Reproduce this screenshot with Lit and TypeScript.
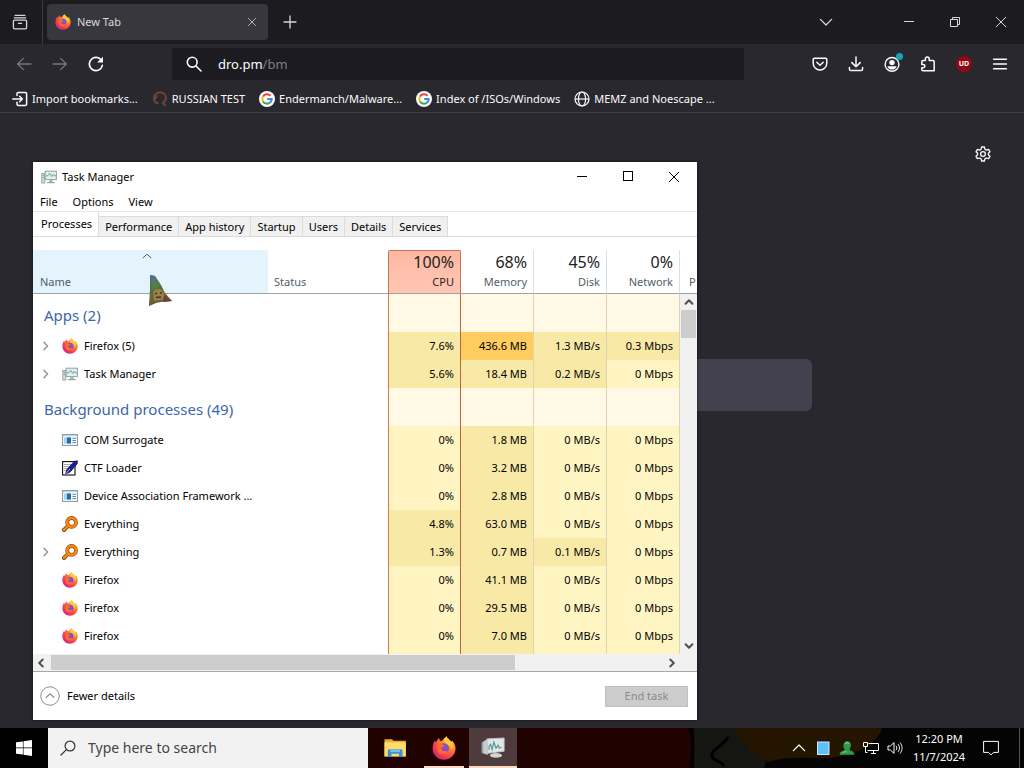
import { LitElement, html, css, svg, nothing } from "lit";
import { customElement } from "lit/decorators.js";
import { classMap } from "lit/directives/class-map.js";

type Level = "lo" | "mid" | "hi";
interface Proc {
  name: string;
  icon: string;
  expand?: boolean;
  values: [string, Level][];
}

const proc = (name: string, icon: string, values: string, levels: string, expand = false): Proc => ({
  name,
  icon,
  expand,
  values: values.split("|").map((v, i) => [v, ({ l: "lo", m: "mid", h: "hi" } as const)[levels[i] as "l" | "m" | "h"]]),
});

const groups: { title: string; rows: Proc[] }[] = [
  {
    title: "Apps (2)",
    rows: [
      proc("Firefox (5)", "firefox", "7.6%|436.6 MB|1.3 MB/s|0.3 Mbps", "mhmm", true),
      proc("Task Manager", "taskmgr", "5.6%|18.4 MB|0.2 MB/s|0 Mbps", "mmml", true),
    ],
  },
  {
    title: "Background processes (49)",
    rows: [
      proc("COM Surrogate", "dll", "0%|1.8 MB|0 MB/s|0 Mbps", "lmll"),
      proc("CTF Loader", "ctf", "0%|3.2 MB|0 MB/s|0 Mbps", "lmll"),
      proc("Device Association Framework ...", "dll", "0%|2.8 MB|0 MB/s|0 Mbps", "lmll"),
      proc("Everything", "everything", "4.8%|63.0 MB|0 MB/s|0 Mbps", "mmll"),
      proc("Everything", "everything", "1.3%|0.7 MB|0.1 MB/s|0 Mbps", "mmml", true),
      proc("Firefox", "firefox", "0%|41.1 MB|0 MB/s|0 Mbps", "lmll"),
      proc("Firefox", "firefox", "0%|29.5 MB|0 MB/s|0 Mbps", "lmll"),
      proc("Firefox", "firefox", "0%|7.0 MB|0 MB/s|0 Mbps", "lmll"),
    ],
  },
];

const line = (d: string, w = 1.2) =>
  svg`<path d=${d} fill="none" stroke="currentColor" stroke-width=${w} stroke-linecap="round" stroke-linejoin="round" />`;

const shapes: Record<string, unknown> = {
  firefox: svg`
    <path d="M8 1.6C8.6 1.5 9.4 0.7 9.6 0.2 10.2 1.6 11.6 2.3 12.4 3.4 13 3.9 13.3 3.6 13.4 3.1 15 4.6 15.9 6.7 15.7 8.8 15.3 12.9 12 15.8 8 15.8 3.8 15.8 0.4 12.5 0.4 8.3 0.4 6.2 1 4.3 2.1 2.8 2.2 3.5 2.4 3.9 2.8 4.1 3.1 3 3.8 2 4.8 1.3 4.8 2.3 5.3 3 6 3.3 7 3.3 7.4 2.2 8 1.6Z" fill="url(#fx-body)" />
    <path d="M9.6 0.2C10.2 1.6 11.6 2.3 12.4 3.4 14 5.2 14.2 7.4 13.2 9.4 12.9 7.6 12 6.4 10.4 5.8 8.4 5 7.6 3.4 8 1.6 8.7 1.4 9.3 0.8 9.6 0.2Z" fill="#ffc83c" />
    <circle cx="8" cy="8.2" r="3.4" fill="#8a4fc8" />
    <path d="M4.2 6.2C5.4 5 7 5.2 8.4 6.4 7.8 7.6 6.6 7.2 6.2 8.2 6.2 10 8.6 10.8 10.6 9.8 9.8 12.4 6.6 13.2 4.6 11.4 3.2 10 3.2 7.8 4.2 6.2Z" fill="#ff6a2b" />`,
  taskmgr: svg`
    <rect x="0.8" y="4.5" width="3" height="9.5" fill="#d5dedf" stroke="#86979b" stroke-width="0.8" />
    <path d="M1.6 6.5h1.4M1.6 8.5h1.4" stroke="#6e8084" stroke-width="0.7" />
    <rect x="4.2" y="2.2" width="11.2" height="8.4" fill="#e4efef" stroke="#8fa2a6" stroke-width="1" />
    <path d="M5 7l2-.4 1.6-2.4 2 3.4 1.6-2.4 1 1.6H15" fill="none" stroke="#5aa093" stroke-width="0.9" />
    <path d="M8.4 10.8h3l.4 2.4H8z" fill="#a8b7ba" />
    <path d="M6.2 13.6h7.4" stroke="#8fa2a6" stroke-width="1.2" />`,
  dll: svg`
    <rect x="0.5" y="2.5" width="15" height="11" fill="#f4f6f7" stroke="#8a9ba8" />
    <path d="M1 3.5h14" stroke="#b9d0de" stroke-width="1.2" />
    <rect x="2" y="5.4" width="3" height="6.2" fill="#a7d0ea" />
    <rect x="5" y="5.4" width="4" height="6.2" fill="#1d6fa8" />
    <path d="M10.4 6.4h3.6M10.4 8.5h3.6M10.4 10.6h3.6" stroke="#6e8ea5" stroke-width="1" />`,
  ctf: svg`
    <rect x="0.6" y="1.6" width="12.4" height="13.4" fill="#fff" stroke="#111" stroke-width="1.1" />
    <path d="M2.5 4.5h8M2.5 6.5h7M2.5 8.5h5M2.5 10.5h3" stroke="#333" stroke-width="0.9" stroke-dasharray="1 1" />
    <path d="M15.4 0.8 12.2 1.4 5.2 9.2 3 14.4 8.4 11.8 15.2 3.6Z" fill="#1b1c9c" stroke="#090a38" stroke-width="0.7" />
    <path d="M3 14.4 8 9" stroke="#fff" stroke-width="0.7" />`,
  everything: svg`
    <path d="M2 14 6 9.8" stroke="#8f4a00" stroke-width="4" stroke-linecap="round" />
    <circle cx="9.6" cy="6.4" r="4.4" fill="#fff" stroke="#8f4a00" stroke-width="3.8" />
    <path d="M2 14 6 9.8" stroke="#f5871c" stroke-width="2.4" stroke-linecap="round" />
    <circle cx="9.6" cy="6.4" r="4.4" fill="none" stroke="#f5871c" stroke-width="2.5" />`,
  google: svg`
    <circle cx="8" cy="8" r="8" fill="#fff" />
    <path d="M11.5 4.8A4.7 4.7 0 0 0 4 5.6" fill="none" stroke="#ea4335" stroke-width="2" />
    <path d="M4 5.6A4.7 4.7 0 0 0 4 10.4" fill="none" stroke="#fbbc05" stroke-width="2" />
    <path d="M4 10.4A4.7 4.7 0 0 0 11 11.6" fill="none" stroke="#34a853" stroke-width="2" />
    <path d="M11 11.6A4.7 4.7 0 0 0 12.7 8.1H8.2" fill="none" stroke="#4285f4" stroke-width="2" />`,
  horse: svg`
    <path d="M6.4 12.6C3.4 11.8 1.8 9.2 2 6.6 2.4 3.4 5 1.4 8 1.4c3.4 0 6 2.4 6 5.6 0 2.4-1.6 3.8-3 4.8l2.6 3.4" fill="none" stroke="#6b4138" stroke-width="2.2" />
    <path d="M5.4 4.4 3.2 8" stroke="#8d5a4b" stroke-width="1" />`,
  globe: svg`<g fill="none" stroke="currentColor" stroke-width="1.2"><circle cx="8" cy="8" r="7"/><ellipse cx="8" cy="8" rx="3.6" ry="7"/><path d="M1 8h14"/></g>`,
  import: svg`${line("M5 4.6V2.6A1.2 1.2 0 0 1 6.2 1.4H13.4A1.2 1.2 0 0 1 14.6 2.6V13.2A1.2 1.2 0 0 1 13.4 14.4H6.2A1.2 1.2 0 0 1 5 13.2V11.2M0.8 8H10.4M7.6 5.2 10.4 8 7.6 10.8", 1.5)}`,
  view: svg`${line("M3.2 1.4H12.8M2.2 3.8H13.8M2.6 6.2H13.4A1.2 1.2 0 0 1 14.6 7.4V13.4A1.4 1.4 0 0 1 13.2 14.8H2.8A1.4 1.4 0 0 1 1.4 13.4V7.4A1.2 1.2 0 0 1 2.6 6.2ZM6.4 9.4H9.6", 1.3)}`,
  back: svg`${line("M15 8H1.6M7.4 2.4 1.6 8 7.4 13.6", 1.3)}`,
  forward: svg`${line("M1 8H14.4M8.6 2.4 14.4 8 8.6 13.6", 1.3)}`,
  reload: svg`${line("M14 5.4A6.6 6.6 0 1 0 14.4 9.4", 1.6)}<path d="M15 0.8V6.6H9.2Z" fill="currentColor" />`,
  find: svg`<circle cx="6.2" cy="6.2" r="4.9" fill="none" stroke="currentColor" stroke-width="1.6" />${line("M10 10 15 15", 1.6)}`,
  pocket: svg`${line("M2.6 2.2H13.4A1.4 1.4 0 0 1 14.8 3.6V7.2A6.8 6.8 0 0 1 1.2 7.2V3.6A1.4 1.4 0 0 1 2.6 2.2ZM4.8 6.2 8 9.2 11.2 6.2", 1.5)}`,
  download: svg`${line("M8 1V10.6M3.8 6.6 8 10.8 12.2 6.6M1.4 11.6V13A1.6 1.6 0 0 0 3 14.6H13A1.6 1.6 0 0 0 14.6 13V11.6", 1.5)}`,
  account: svg`<circle cx="8" cy="8.4" r="6.9" fill="none" stroke="currentColor" stroke-width="1.4" /><circle cx="8" cy="6.6" r="2.7" fill="currentColor" /><path d="M3.4 10.2H12.6C12 12.4 10.2 13.6 8 13.6S4 12.4 3.4 10.2Z" fill="currentColor" />`,
  puzzle: svg`${line("M5.4 4.6V3A1.9 1.9 0 0 1 9.2 3V4.6H13A1.2 1.2 0 0 1 14.2 5.8V14.8H3A1.2 1.2 0 0 1 1.8 13.6V11.8H3.2A1.7 1.7 0 0 0 3.2 8.4H1.8V5.8A1.2 1.2 0 0 1 3 4.6Z", 1.5)}`,
  menu: svg`${line("M1.6 3.2H14.4M1.6 8H14.4M1.6 12.8H14.4", 1.5)}`,
  gear: svg`${line("M6.6 1H9.4L9.9 3.2 11.4 4.1 13.6 3.4 15 5.8 13.4 7.3V8.8L15 10.3 13.6 12.7 11.4 12 9.9 12.9 9.4 15H6.6L6.1 12.9 4.6 12 2.4 12.7 1 10.3 2.6 8.8V7.3L1 5.8 2.4 3.4 4.6 4.1 6.1 3.2Z", 1.3)}<circle cx="8" cy="8" r="2.4" fill="none" stroke="currentColor" stroke-width="1.3" />`,
  close: svg`${line("M3.2 3.2 12.8 12.8M12.8 3.2 3.2 12.8", 1)}`,
  plus: svg`${line("M8 2V14M2 8H14", 1.3)}`,
  down: svg`${line("M2.4 5.4 8 11 13.6 5.4", 1.3)}`,
  up: svg`${line("M2.4 10.6 8 5 13.6 10.6", 1.3)}`,
  minimize: svg`<path d="M3 7.5H13" stroke="currentColor" />`,
  maximize: svg`<rect x="3.5" y="2.5" width="9" height="9" fill="none" stroke="currentColor" />`,
  restore: svg`<path d="M3.5 5.5H10.5V12.5H3.5ZM5.5 5.5V3.5H12.5V10.5H10.5" fill="none" stroke="currentColor" />`,
  thickUp: svg`${line("M4.6 9.8 8 6.2 11.4 9.8", 2)}`,
  thickDown: svg`${line("M4.6 6.2 8 9.8 11.4 6.2", 2)}`,
  thickLeft: svg`${line("M9.8 4.6 6.2 8 9.8 11.4", 2)}`,
  thickRight: svg`${line("M6.2 4.6 9.8 8 6.2 11.4", 2)}`,
  expand: svg`${line("M6 4.4 9.6 8 6 11.6", 1.5)}`,
  sort: svg`${line("M4 9.8 8 6.2 12 9.8", 1)}`,
  fewer: svg`<circle cx="8" cy="8" r="7.4" fill="none" stroke="#8c8c8c" stroke-width="0.8" /><path d="M4.6 9.4 8 6.2 11.4 9.4" fill="none" stroke="#8c8c8c" stroke-width="0.9" />`,
  windows: svg`<path d="M0 2.3 6.9 1.4V7.6H0ZM7.5 1.3 16 0V7.6H7.5ZM0 8.3H6.9V14.6L0 13.7ZM7.5 8.3H16V16L7.5 14.7Z" fill="#fff" />`,
  lens: svg`<circle cx="10" cy="6" r="4.9" fill="none" stroke="currentColor" stroke-width="1.2" />${line("M6.4 9.6 1 15", 1.2)}`,
  folder: svg`
    <path d="M1 2.2H6L7 3.2H15.2V13.6H1Z" fill="#e9ae36" /><path d="M1 4.2H15.2V13.6H1Z" fill="#ffdb68" />
    <path d="M3.2 14V9.8A1 1 0 0 1 4.2 8.8H12A1 1 0 0 1 13 9.8V14H10.6V11.8H5.6V14Z" fill="#3b8fd4" /><path d="M4.8 9H11.4V10.6H4.8Z" fill="#7fc0ee" />`,
  bigTaskmgr: svg`
    <path d="M0.4 5 3.4 3V13L0.4 12Z" fill="#9ba3a4" />
    <path d="M1.6 4.6 4.6 2.6V13.4L1.6 12Z" fill="#c6cbcb" />
    <path d="M4 2.6 15.4 2V10.8L4.6 12.2Z" fill="#e4e6e6" stroke="#c2c6c6" stroke-width="0.6" />
    <path d="M5.4 9.8V7.4L6.4 6.2 7.4 9.6 8.6 4.8 10 8.8 11.4 6.8 12.2 8.8 13.6 8" fill="none" stroke="#4f9c98" stroke-width="0.8" />
    <ellipse cx="10" cy="13.6" rx="4" ry="1.6" fill="#d2d4d4" />`,
  tile: svg`<rect x="2.5" y="2" width="11.5" height="12.5" fill="#5ec0f8" stroke="#cdeafb" />`,
  person: svg`<path d="M0.6 14.8C0.6 12 3 10.8 5.6 10.2L5.2 8.4C4 6.8 4 4 5.4 2.4 7 0.6 10 0.8 11.4 2.8 12.6 4.6 12 7 10.8 8.6L10.6 10.2C13 10.8 15.4 12 15.4 14.8Z" fill="#2e9a4b" /><path d="M6.4 4C6.8 2.8 8.4 2.2 9.8 3.2" stroke="#a8e6ac" fill="none" /><path d="M3 13.4C4 11.8 6 11.4 8 12" stroke="#79cf85" fill="none" />`,
  network: svg`<path d="M5.5 3.5H15.5V10.5H4.5M8 13.5H13M10.5 10.5V13.5M0.5 2.5H4.5V6.5H0.5ZM2.5 6.5V12.5H4.5" fill="none" stroke="#fff" />`,
  sound: svg`<path d="M1 6H3.4L7 2.6V13.4L3.4 10H1Z" fill="none" stroke="#fff" />${line("M9.2 6C10 7.2 10 8.8 9.2 10M11.2 4.4C13 6.6 13 9.4 11.2 11.6M13.2 2.8C15.8 6 15.8 10 13.2 13.2", 0.9)}`,
  notify: svg`<path d="M0.6 1.4H15.4V12.4H10.6L8 14.8 5.4 12.4H0.6Z" fill="none" stroke="#fff" />`,
};

const icon = (name: string, size: "s12" | "s16" | "s20" | "s24" = "s16") =>
  html`<svg class="icon ${size}" viewBox="0 0 16 16" aria-hidden="true">${shapes[name]}</svg>`;

const gradients = html`<svg class="defs" width="0" height="0" aria-hidden="true"><defs>
  <radialGradient id="fx-body" cx="0.8" cy="0.15" r="1"><stop offset="0" stop-color="#ffd43a" /><stop offset="0.45" stop-color="#ff7b2e" /><stop offset="0.8" stop-color="#f0355a" /><stop offset="1" stop-color="#c8208c" /></radialGradient>
</defs></svg>`;

const shared = css`
  .defs { position: absolute; }
  .icon { display: block; flex: none; }
  .s12 { width: 12px; height: 12px; }
  .s16 { width: 16px; height: 16px; }
  .s20 { width: 20px; height: 20px; }
  .s24 { width: 24px; height: 24px; }
  button { font: inherit; color: inherit; background: none; border: 0; padding: 0; }
`;

@customElement("firefox-window")
export class FirefoxWindow extends LitElement {
  static styles = [shared, css`
    :host { display: flex; flex-direction: column; color: #fbfbfe; font: 11px/16px "Noto Sans", "Open Sans", sans-serif; background: #29282e; }
    button { display: flex; align-items: center; justify-content: center; }
    .strip { display: flex; align-items: center; height: 44px; background: #1c1b20; color: #d8d8dc; }
    .view { width: 40px; height: 44px; margin-right: 2px; }
    .tab { display: flex; align-items: center; gap: 6px; box-sizing: border-box; width: 221px; height: 36px; margin-left: 4px; padding: 0 10px 0 8px; border-radius: 4px; background: #38373e; }
    .divider { width: 1px; height: 44px; background: #3c3b41; }
    .label { flex: 1; }
    .add { width: 43px; height: 36px; }
    .alltabs { margin-left: auto; width: 36px; height: 36px; margin-right: 42px; }
    .caption { width: 46px; height: 44px; }
    .nav { display: flex; align-items: center; height: 40px; padding: 0 6px; }
    .nav button { width: 36px; height: 36px; position: relative; }
    .nav .dim { color: #77767c; }
    .gap { flex: 1; max-width: 58px; }
    .urlbar { flex: 8; display: flex; align-items: center; gap: 16px; height: 32px; padding: 0 14px; background: #1c1b22; }
    .field { position: relative; display: flex; flex: 1; }
    .field input { width: 100%; border: 0; padding: 0; background: none; color: transparent; font: inherit; font-size: 13px; line-height: 20px; outline: none; }
    .host { position: absolute; inset: 0; font-size: 13px; line-height: 20px; pointer-events: none; color: #fbfbfe; }
    .path { color: #7e7d83; }
    .dot { position: absolute; top: 7px; right: 7px; width: 7px; height: 7px; border-radius: 50%; background: #18a3b8; }
    .shield { display: grid; place-items: center; width: 16px; height: 16px; border-radius: 50%; background: #8e0a14; font-weight: bold; font-size: 7px; line-height: 8px; }
    .bookmarks { display: flex; align-items: center; gap: 14px; box-sizing: border-box; height: 29px; padding: 1px 12px 0; border-bottom: 1px solid #3f3e44; }
    .bookmarks a { display: flex; align-items: center; gap: 4px; color: inherit; text-decoration: none; white-space: nowrap; }
    .page { flex: 1; display: flex; flex-direction: column; padding: 32px 32px 0; }
    .gear { align-self: flex-end; width: 18px; height: 18px; }
    .search { align-self: center; box-sizing: border-box; width: min(600px, 100%); height: 52px; margin-top: 196px; border: 0; border-radius: 6px; background: #42414d; color: inherit; }
  `];

  render() {
    const marks = [
      ["import", "Import bookmarks..."],
      ["horse", "RUSSIAN TEST"],
      ["google", "Endermanch/Malware..."],
      ["google", "Index of /ISOs/Windows"],
      ["globe", "MEMZ and Noescape ..."],
    ];
    return html`
      ${gradients}
      <header class="strip">
        <button class="view" aria-label="View">${icon("view")}</button>
        <span class="divider"></span>
        <div class="tab">${icon("firefox")}<span class="label">New Tab</span><button aria-label="Close tab">${icon("close", "s12")}</button></div>
        <button class="add" aria-label="Open a new tab">${icon("plus")}</button>
        <button class="alltabs" aria-label="List all tabs">${icon("down")}</button>
        <button class="caption" aria-label="Minimize">${icon("minimize")}</button>
        <button class="caption" aria-label="Restore">${icon("restore")}</button>
        <button class="caption" aria-label="Close">${icon("close")}</button>
      </header>
      <nav class="nav">
        <button class="dim" aria-label="Back">${icon("back")}</button>
        <button class="dim" aria-label="Forward">${icon("forward")}</button>
        <button aria-label="Reload">${icon("reload")}</button>
        <span class="gap"></span>
        <div class="urlbar">${icon("find")}
          <div class="field"><input aria-label="Address" value="dro.pm/bm" /><span class="host" aria-hidden="true">dro.pm<span class="path">/bm</span></span></div>
        </div>
        <span class="gap"></span>
        <button aria-label="Pocket">${icon("pocket")}</button>
        <button aria-label="Downloads">${icon("download")}</button>
        <button aria-label="Account">${icon("account")}<span class="dot"></span></button>
        <button aria-label="Extensions">${icon("puzzle")}</button>
        <button aria-label="Blocker"><span class="shield">UD</span></button>
        <button aria-label="Menu">${icon("menu")}</button>
      </nav>
      <nav class="bookmarks">${marks.map(([i, t]) => html`<a href="#">${icon(i)}<span>${t}</span></a>`)}</nav>
      <main class="page">
        <button class="gear" aria-label="Personalize">${icon("gear")}</button>
        <input class="search" type="search" aria-label="Search the web" />
      </main>
    `;
  }
}

@customElement("task-manager")
export class TaskManager extends LitElement {
  static styles = [shared, css`
    :host { display: block; background: #fff; color: #000; font: 11px/16px "Noto Sans", "Open Sans", sans-serif; box-shadow: 0 0 3px rgba(0, 0, 0, 0.6); }
    .title { display: flex; align-items: center; height: 30px; padding-left: 8px; gap: 5px; }
    .title h1 { flex: 1; margin: 0; font: inherit; }
    .caption { display: grid; place-items: center; width: 46px; height: 30px; margin-left: -5px; }
    .menu { display: flex; gap: 15px; height: 19px; padding: 0 7px; border-bottom: 1px solid #e6e6e6; }
    .tabs { display: flex; align-items: flex-end; height: 24px; border-bottom: 1px solid #dcdcdc; margin-bottom: 13px; }
    .tab { height: 20px; padding: 0 6px; background: #f0f0f0; border: 1px solid #dcdcdc; border-bottom: 0; border-left: 0; }
    .tab.on { height: 24px; padding: 0 6px 0 8px; background: #fff; border-top: 0; }
    .list { position: relative; overflow: hidden; }
    table { width: 100%; border-collapse: separate; border-spacing: 0; table-layout: fixed; }
    th, td { padding: 0; font-weight: normal; white-space: nowrap; overflow: hidden; box-sizing: border-box; }
    .c-status { width: 120px; }
    .c-num { width: 73px; }
    .c-end { width: 17px; }
    thead th { height: 44px; border-bottom: 1px solid #9aa3a8; color: #4f5e6b; text-align: left; vertical-align: bottom; padding: 0 7px 3px; }
    thead .name { background: #e5f3fd; position: relative; }
    thead .status { padding-left: 6px; }
    .sort { position: absolute; left: 0; right: 8px; top: -2px; display: grid; place-items: center; }
    thead .num { text-align: right; padding: 0 6px 3px; border-right: 1px solid #dcdfe2; }
    thead .num b { display: block; font-weight: normal; font-size: 16px; line-height: 23px; color: #222; }
    thead .num.cpu { background: linear-gradient(#ffb8a2, #ffc7b4); border: 1px solid #c8735a; border-bottom-color: #9aa3a8; border-radius: 2px 2px 0 0; color: #222; }
    thead .end { padding: 0 0 3px 9px; }
    tbody .num { text-align: right; padding-right: 6px; border-right: 1px solid #dcd5b4; }
    tbody .num.cpu { border-left: 1px solid #d8774f; border-right-color: #b8653f; }
    .row { height: 28px; }
    .group { height: 38px; }
    .group th { text-align: left; padding: 4px 0 0 11px; font-size: 15px; line-height: 20px; color: #3d66ae; }
    .more { height: 4px; }
    .none { background: #fff9e5; }
    .lo { background: #fff5c2; }
    .mid { background: #f8eaa6; }
    .hi { background: #ffcd5f; }
    .cell { display: flex; align-items: center; padding-left: 5px; gap: 6px; }
    .twist { display: grid; place-items: center; width: 16px; height: 16px; margin-right: 2px; color: #999; }
    .vbar { position: absolute; right: 0; top: 44px; bottom: 0; width: 17px; display: flex; flex-direction: column; align-items: center; justify-content: space-between; background: #f1f1f1; color: #505050; }
    .vthumb { width: 15px; height: 28px; background: #cdcdcd; }
    .vspace { flex: 1; }
    .hbar { display: flex; align-items: center; height: 17px; padding-right: 17px; background: #f1f1f1; color: #505050; border-bottom: 1px solid #a8a8a8; }
    .hthumb { width: 76%; height: 15px; background: #cdcdcd; }
    .hrail { flex: 1; display: flex; margin: 0 2px; }
    .foot { display: flex; align-items: center; justify-content: space-between; height: 48px; padding: 0 9px 0 7px; }
    .fewer { display: flex; align-items: center; gap: 7px; }
    .end-task { width: 83px; height: 21px; background: #cccccc; border: 1px solid #bfbfbf; color: #8a8a8a; }
  `];

  private cells(values: [string, Level | "none"][]) {
    return values.map(([text, level], i) => html`<td class=${classMap({ num: true, cpu: i === 0, [level]: true })}>${text}</td>`);
  }

  render() {
    const blank: [string, "none"][] = [["", "none"], ["", "none"], ["", "none"], ["", "none"]];
    const heads = [["100%", "CPU"], ["68%", "Memory"], ["45%", "Disk"], ["0%", "Network"]];
    const tabs = ["Processes", "Performance", "App history", "Startup", "Users", "Details", "Services"];
    return html`
      ${gradients}
      <div class="title">${icon("taskmgr")}<h1>Task Manager</h1>
        <button class="caption" aria-label="Minimize">${icon("minimize")}</button>
        <button class="caption" aria-label="Maximize">${icon("maximize")}</button>
        <button class="caption" aria-label="Close">${icon("close")}</button>
      </div>
      <div class="menu"><button>File</button><button>Options</button><button>View</button></div>
      <div class="tabs" role="tablist">${tabs.map((t, i) => html`<button role="tab" class=${classMap({ tab: true, on: i === 0 })}>${t}</button>`)}</div>
      <div class="list">
        <table>
          <colgroup><col /><col class="c-status" /><col class="c-num" /><col class="c-num" /><col class="c-num" /><col class="c-num" /><col class="c-end" /></colgroup>
          <thead><tr>
            <th class="name">Name<span class="sort">${icon("sort")}</span></th>
            <th class="status">Status</th>
            ${heads.map(([n, t], i) => html`<th class=${classMap({ num: true, cpu: i === 0 })}><b>${n}</b>${t}</th>`)}
            <th class="end">P</th>
          </tr></thead>
          <tbody>
            ${groups.map((g) => html`
              <tr class="group"><th colspan="2">${g.title}</th>${this.cells(blank)}<td></td></tr>
              ${g.rows.map((r) => html`<tr class="row">
                <td colspan="2"><div class="cell"><span class="twist">${r.expand ? icon("expand") : nothing}</span>${icon(r.icon)}<span>${r.name}</span></div></td>
                ${this.cells(r.values)}<td></td>
              </tr>`)}`)}
            <tr class="more"><td colspan="2"></td>${this.cells([["", "lo"], ["", "mid"], ["", "lo"], ["", "lo"]])}<td></td></tr>
          </tbody>
        </table>
        <div class="vbar" aria-hidden="true">${icon("thickUp")}<span class="vthumb"></span><span class="vspace"></span>${icon("thickDown")}</div>
      </div>
      <div class="hbar" aria-hidden="true">${icon("thickLeft")}<span class="hrail"><span class="hthumb"></span></span>${icon("thickRight")}</div>
      <div class="foot"><button class="fewer">${icon("fewer", "s20")}Fewer details</button><button class="end-task" disabled>End task</button></div>
    `;
  }
}

@customElement("task-bar")
export class TaskBar extends LitElement {
  static styles = [shared, css`
    :host { display: flex; position: relative; height: 40px; background: #000; color: #fff; font: 11px/18px "Noto Sans", "Open Sans", sans-serif; }
    button { display: grid; place-items: center; }
    .start { width: 48px; }
    .search { display: flex; align-items: center; gap: 12px; box-sizing: border-box; width: 320px; padding: 0 12px; background: #f2f2f2; color: #333; }
    .search input { flex: 1; min-width: 0; border: 0; padding: 0; background: none; outline: none; font: inherit; font-size: 14px; line-height: 20px; }
    .search input::placeholder { color: #444; opacity: 1; }
    .desk { flex: 1; display: flex; align-items: stretch; min-width: 0; position: relative; }
    .art { position: absolute; inset: 0; width: 100%; height: 100%; }
    .apps { display: flex; position: relative; padding-left: 3px; gap: 1px; }
    .app { width: 48px; box-sizing: border-box; }
    .run::after { content: ""; position: absolute; bottom: 0; width: 40px; height: 2px; background: #fbd9bf; }
    .on { background: #4d3b3d; border-bottom: 2px solid #fbd9bf; }
    .tray { position: relative; display: flex; align-items: center; margin-left: auto; }
    .tray button { width: 24px; height: 40px; }
    .clock { text-align: center; width: 64px; }
    .tray .notify { width: 40px; }
    .peek { width: 1px; height: 40px; margin: 0 4px 0 8px; background: #555; }
  `];

  render() {
    return html`
      ${gradients}
      <button class="start" aria-label="Start">${icon("windows")}</button>
      <label class="search">${icon("lens")}<input placeholder="Type here to search" aria-label="Type here to search" /></label>
      <div class="desk">
        <svg class="art" viewBox="368 0 656 40" preserveAspectRatio="none" aria-hidden="true">
          <rect x="368" width="656" height="40" fill="#040404" />
          <rect x="368" width="324" height="40" fill="#200200" />
          <path d="M694 0H740L752 16 766 34 764 40H694Z" fill="#151612" />
          <path d="M734 0H882C878 14 862 26 830 30 804 30 786 28 768 34 752 26 742 14 734 0Z" fill="#241500" />
          <path d="M728 9C724 18 710 22 712 28 714 34 720 32 724 38" fill="none" stroke="#000" stroke-width="3" />
          <path d="M690 0C694 10 693 28 691 40" fill="none" stroke="#000" stroke-width="3" />
        </svg>
        <div class="apps">
          <button class="app" aria-label="File Explorer">${icon("folder", "s24")}</button>
          <button class="app run" aria-label="Firefox">${icon("firefox", "s24")}</button>
          <button class="app on" aria-label="Task Manager">${icon("bigTaskmgr", "s24")}</button>
        </div>
        <div class="tray">
          <button aria-label="Show hidden icons">${icon("up")}</button>
          <button aria-label="Tile">${icon("tile")}</button>
          <button aria-label="Messenger">${icon("person")}</button>
          <button aria-label="Network">${icon("network")}</button>
          <button aria-label="Volume">${icon("sound")}</button>
          <div class="clock">12:20 PM<br />11/7/2024</div>
          <button class="notify" aria-label="Notifications">${icon("notify")}</button>
          <span class="peek"></span>
        </div>
      </div>
    `;
  }
}

@customElement("app-root")
export class AppRoot extends LitElement {
  static styles = css`
    :host { position: relative; display: flex; flex-direction: column; min-height: 100vh; background: #29282e; }
    firefox-window { flex: 1; }
    task-manager { position: absolute; left: 33px; top: 162px; width: min(664px, calc(100vw - 66px)); }
    .pointer { position: absolute; left: 147px; top: 273px; width: 27px; height: 35px; pointer-events: none; }
  `;

  render() {
    return html`
      <firefox-window></firefox-window>
      <task-bar></task-bar>
      <task-manager></task-manager>
      <svg class="pointer" viewBox="0 0 27 35" aria-hidden="true">
        <path d="M3 2 8 3 14 12 18 20 25 28 14 29 9 30 2 33 3 16Z" fill="#5d6a3c" />
        <path d="M3 2 8 3 11 9 4 12Z" fill="#55708a" />
        <path d="M4 9 10 8 13 13 5 17Z" fill="#4f8047" />
        <path d="M6 19C9 14 14 15 17 20L18 26 7 28Z" fill="#9a8148" />
        <path d="M3 27 2 33 10 29Z" fill="#7c5230" />
        <path d="M17 22 25 28 16 29Z" fill="#6f3f35" />
        <path d="M8 20.5h2M13 20h2M9 24.5l5-.5" stroke="#40331c" stroke-width="1.3" />
      </svg>
    `;
  }
}
